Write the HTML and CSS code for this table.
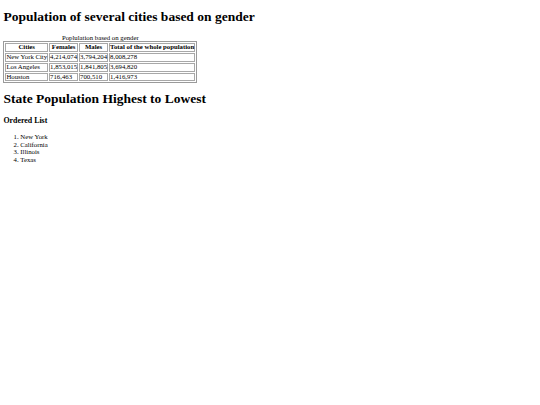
FILE: index.html
```html
<!DOCTYPE html>
<html>
<head>
<meta charset="utf-8">
<title>Population</title>
<link rel="stylesheet" href="styles.css">
</head>
<body class="page">
<h1 class="title">Population of several cities based on gender</h1>
<table class="pop-table">
<caption class="pop-caption">Poplulation based on gender</caption>
<tr><th>Cities</th><th>Females</th><th>Males</th><th>Total of the whole population</th></tr>
<tr><td>New York City</td><td>4,214,074</td><td>3,794,204</td><td>8,008,278</td></tr>
<tr><td>Los Angeles</td><td>1,853,015</td><td>1,841,805</td><td>3,694,820</td></tr>
<tr><td>Houston</td><td>716,463</td><td>700,510</td><td>1,416,973</td></tr>
</table>
<h1 class="title title-second">State Population Highest to Lowest</h1>
<h3 class="list-title">Ordered List</h3>
<ol class="states">
<li>New York</li>
<li>California</li>
<li>Illinois</li>
<li>Texas</li>
</ol>
</body>
</html>
```

FILE: styles.css
```css
html {
  background: #fff;
}
.page {
  margin: 0;
  padding: 0 3.4px;
  font-family: "Liberation Serif", "Times New Roman", serif;
  font-size: 6.75px;
  line-height: 7.76px;
  color: #000;
}
.title {
  font-size: 13.5px;
  line-height: 15.5px;
  font-weight: bold;
  margin: 9px 0;
}
.title-second {
  margin-top: 8px;
}
.pop-table {
  border: 1px solid #9a9a9a;
  border-collapse: separate;
  border-spacing: 1px;
}
.pop-caption {
  text-align: center;
  line-height: 7.76px;
}
.pop-table th,
.pop-table td {
  border: 1px solid #a8a8a8;
  padding: 0;
  line-height: 6.8px;
}
.pop-table th {
  font-weight: bold;
  text-align: center;
}
.pop-table td {
  text-align: left;
}
.list-title {
  font-size: 7.9px;
  line-height: 9px;
  font-weight: bold;
  margin: 7.9px 0;
}
.states {
  margin: 6.75px 0;
  padding-left: 16.9px;
}
```
